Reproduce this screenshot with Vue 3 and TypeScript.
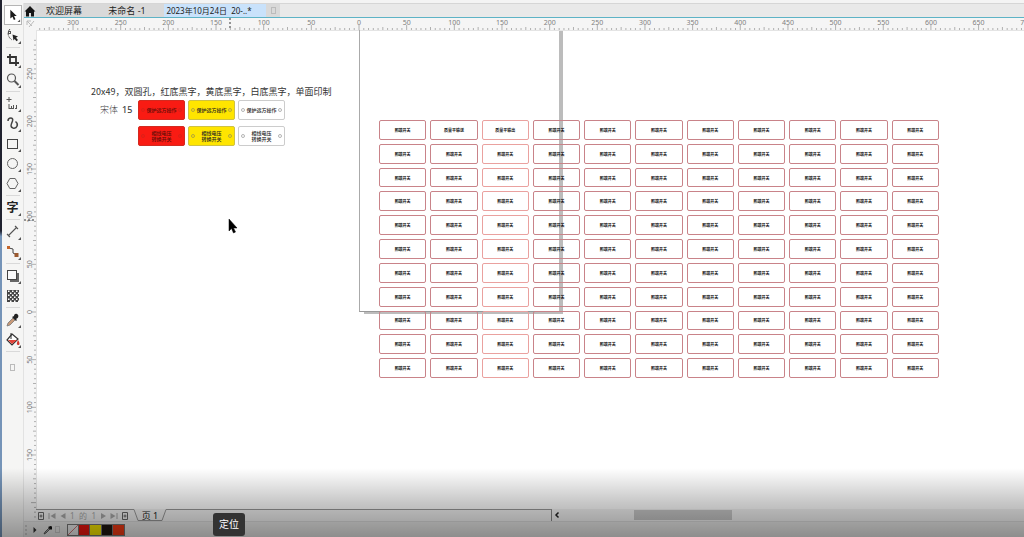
<script setup lang="ts">
import { computed, onBeforeUnmount, onMounted, ref } from 'vue'

interface Tick {
  at: number
  major: boolean
  medium: boolean
  label: string
}

const UNIT = 47.66

const viewWidth = ref(window.innerWidth)
const viewHeight = ref(window.innerHeight)

function measure() {
  viewWidth.value = window.innerWidth
  viewHeight.value = window.innerHeight
}
onMounted(() => window.addEventListener('resize', measure))
onBeforeUnmount(() => window.removeEventListener('resize', measure))

function makeTicks(origin: number, start: number, end: number, labelEnd: number): Tick[] {
  const step = UNIT / 10
  const ticks: Tick[] = []
  for (let i = Math.ceil((start - origin) / step); origin + i * step <= end; i++) {
    const at = origin + i * step
    ticks.push({
      at,
      major: i % 10 === 0,
      medium: i % 5 === 0,
      label: i % 10 === 0 && at < labelEnd ? String(Math.abs(i) * 5) : '',
    })
  }
  return ticks
}

const horizontalTicks = computed(() => makeTicks(335, 15, viewWidth.value - 20, viewWidth.value))
const verticalTicks = computed(() => makeTicks(282, 6, viewHeight.value - 46, viewHeight.value - 70))

interface Tool {
  id: string
  name: string
  flyout?: boolean
  divider?: boolean
}

const tools: Tool[] = [
  { id: 'pick', name: '选择', flyout: true },
  { id: 'shape', name: '形状', flyout: true, divider: true },
  { id: 'crop', name: '裁剪', flyout: true },
  { id: 'zoom', name: '缩放', flyout: true, divider: true },
  { id: 'freehand', name: '手绘', flyout: true },
  { id: 'artistic', name: '艺术笔', flyout: true },
  { id: 'rect', name: '矩形', flyout: true },
  { id: 'ellipse', name: '椭圆形', flyout: true },
  { id: 'polygon', name: '多边形', flyout: true, divider: true },
  { id: 'text', name: '文本', flyout: true, divider: true },
  { id: 'dimension', name: '度量', flyout: true },
  { id: 'connector', name: '连接器', flyout: true, divider: true },
  { id: 'shadow', name: '阴影', flyout: true },
  { id: 'transparency', name: '透明度', divider: true },
  { id: 'dropper', name: '颜色滴管', flyout: true },
  { id: 'fill', name: '交互式填充', flyout: true, divider: true },
]

const labels: string[] = Array.from({ length: 121 }, (_, i) =>
  i === 1 ? '质量平输送' : i === 2 ? '质量平输出' : '照端开关',
)

const samples = [
  { tone: 'red', lines: ['保护远方操作'] },
  { tone: 'yellow', lines: ['保护远方操作'] },
  { tone: 'white', lines: ['保护远方操作'] },
  { tone: 'red', lines: ['相线电压', '转换开关'] },
  { tone: 'yellow', lines: ['相线电压', '转换开关'] },
  { tone: 'white', lines: ['相线电压', '转换开关'] },
]

const swatches = ['red', 'yellow', 'black', 'orange']
</script>

<template>
  <div class="app">
    <div class="desktop-edge"></div>
    <nav class="toolbox" aria-label="工具箱">
      <template v-for="tool in tools" :key="tool.id">
        <button class="tool" :class="{ active: tool.id === 'pick' }" :aria-label="tool.name">
          <svg viewBox="0 0 18 18" width="18" height="18">
            <g v-if="tool.id === 'pick'"><path d="M6 3v10l2.400-2.100 1.600 3.600 1.800-.8-1.600-3.500h3z" fill="#1c1c1c" /></g>
            <g v-else-if="tool.id === 'shape'" fill="none" stroke="#555">
              <path d="M6 2c-3 3-2.500 8 2 11" stroke-dasharray="3 1" /><rect x="4.500" y="4.500" width="2" height="2" fill="#fff" />
              <path d="M8.500 7.500l5.500 2-2 1.200 2 2.300-1.500 1.200-1.800-2.300-1.200 1.600z" fill="#222" stroke="none" />
            </g>
            <g v-else-if="tool.id === 'crop'" fill="none" stroke="#333" stroke-width="1.800">
              <path d="M6 3v9h9M3 6h9v9" />
            </g>
            <g v-else-if="tool.id === 'zoom'" fill="none" stroke="#555">
              <circle cx="7.500" cy="7" r="4" stroke-width="1.200" /><path d="M10.500 10l4 4" stroke-width="2" />
            </g>
            <g v-else-if="tool.id === 'freehand'" fill="none" stroke="#555">
              <path d="M5 2v5M2.500 4.500h5M5 9v5M7.500 11v3M9.500 10v4M12.500 10v4" /><path d="M5 13.500h8" stroke-dasharray="2 1" />
            </g>
            <g v-else-if="tool.id === 'artistic'" fill="none" stroke="#444" stroke-width="1.500">
              <path d="M4 6c0-4 6-4 4.500 0-1 3-3 6 .5 7 4 1 6-4 2.500-6.500" />
            </g>
            <rect v-else-if="tool.id === 'rect'" x="3.500" y="4.500" width="10" height="9" fill="none" stroke="#444" />
            <circle v-else-if="tool.id === 'ellipse'" cx="8.500" cy="8.500" r="5" fill="none" stroke="#666" />
            <path v-else-if="tool.id === 'polygon'" d="M5.800 3.500h5.400l2.800 5-2.800 5H5.800L3 8.500z" fill="none" stroke="#666" />
            <text v-else-if="tool.id === 'text'" class="glyph" x="8.500" y="13" text-anchor="middle">字</text>
            <g v-else-if="tool.id === 'dimension'" stroke="#555">
              <path d="M4 13l9-9M3 11l3 3M11 3l3 3" stroke-width="1.100" />
            </g>
            <g v-else-if="tool.id === 'connector'">
              <path d="M5 5l4 1v4l4 2" fill="none" stroke="#444" />
              <rect x="3" y="3" width="3" height="3" fill="#c5662b" /><rect x="10.500" y="10" width="4" height="4" fill="#9b5a30" />
            </g>
            <g v-else-if="tool.id === 'shadow'">
              <rect x="6" y="6" width="9" height="9" fill="#666" /><rect x="3.500" y="3.500" width="9" height="9" fill="#fafafa" stroke="#444" />
            </g>
            <g v-else-if="tool.id === 'transparency'">
              <rect x="3" y="3" width="12" height="12" fill="#444" />
              <template v-for="n in 18" :key="n">
                <rect :x="4 + ((n - 1) % 3) * 4 + (Math.floor((n - 1) / 3) % 2) * 2" :y="3.500 + Math.floor((n - 1) / 3) * 2" width="1.500" height="1.500" fill="#fff" />
              </template>
            </g>
            <g v-else-if="tool.id === 'dropper'">
              <path d="M3 15l1-3 5-5 2 2-5 5z" fill="#c99a78" stroke="#777" stroke-width=".8" />
              <path d="M8 6l4 4 1-1-1-1c3-1 3-4 1-5s-3 1-3 2z" fill="#222" />
            </g>
            <g v-else>
              <path d="M8 3l6 5-6 6-5-5z" fill="#fff" stroke="#333" stroke-width="1.200" />
              <path d="M4 9h9l-5 4z" fill="#e1443a" /><path d="M7 2v6" stroke="#333" /><path d="M14 9c2 3 2 5 0 5s-1-3 0-5" fill="#d6372e" />
            </g>
            <path v-if="tool.flyout" d="M17 14v3h-3z" fill="#555" />
          </svg>
        </button>
        <hr v-if="tool.divider" class="tool-divider" />
      </template>
      <button class="add-tool" aria-label="自定义工具箱"><span></span></button>
    </nav>

    <div class="workspace">
      <header class="tabs">
        <button class="home" aria-label="主页">
          <svg viewBox="0 0 12 12" width="12" height="12"><path d="M6 1L0.500 6.500H2V11.500H5V8H7V11.500H10V6.500H11.500z" fill="#161616" /></svg>
        </button>
        <button class="tab welcome">欢迎屏幕</button>
        <button class="tab untitled">未命名 -1</button>
        <button class="tab current">2023年10月24日&nbsp; 20-..*</button>
        <button class="tab new" aria-label="新建"><span></span></button>
      </header>

      <div class="ruler-top">
        <svg width="100%" height="12">
          <path d="M3 3l5 5M3 3v4M3 3h4M5 9l5-6" stroke="#bbb" fill="none" />
          <g v-for="tick in horizontalTicks" :key="tick.at">
            <line :x1="tick.at" :x2="tick.at" :y1="tick.major ? 7 : tick.medium ? 9 : 10" y2="12" class="tick" />
            <text v-if="tick.label" :x="tick.at" y="7" text-anchor="middle" class="tick-label">{{ tick.label }}</text>
          </g>
          <line x1="206" x2="206" y1="0" y2="12" class="marker" />
        </svg>
      </div>

      <div class="work-row">
        <div class="ruler-left">
          <svg width="12" height="100%">
            <g v-for="tick in verticalTicks" :key="tick.at">
              <line :y1="tick.at" :y2="tick.at" :x1="tick.major ? 7 : tick.medium ? 9 : 10" x2="12" class="tick" />
              <text v-if="tick.label" class="tick-label" text-anchor="middle" :transform="`translate(8 ${tick.at}) rotate(-90)`">{{ tick.label }}</text>
            </g>
            <line y1="190" y2="190" x1="0" x2="12" class="marker" />
          </svg>
        </div>

        <div class="document">
          <main class="canvas">
            <div class="page"><i class="shade-right"></i><i class="shade-bottom"></i></div>

            <p class="note">20x49，双圆孔，红底黑字，黄底黑字，白底黑字，单面印制</p>
            <p class="font-note">宋体&nbsp; <b>15</b></p>
            <div class="samples">
              <div v-for="(sample, i) in samples" :key="i" class="sample" :class="sample.tone">
                <i class="hole"></i>
                <span><template v-for="(line, j) in sample.lines" :key="j"><br v-if="j" />{{ line }}</template></span>
                <i class="hole"></i>
              </div>
            </div>

            <div class="labels">
              <div v-for="(text, i) in labels" :key="i" class="label" :class="{ light: i % 11 === 2 }">{{ text }}</div>
            </div>

            <svg class="pointer" viewBox="0 0 10 16" width="10" height="16">
              <path d="M1 1v12l2.500-2.500L5.500 15l2-1-2-4H9z" fill="#000" stroke="#000" stroke-width=".5" />
            </svg>
          </main>

          <footer class="page-bar">
            <div class="page-nav">
              <button aria-label="在前面添加页"><svg viewBox="0 0 8 8" width="8" height="8"><path d="M1.500.5h5v7h-5zM4 2.500v3M2.500 4h3" fill="none" stroke="#666" /></svg></button>
              <button aria-label="第一页"><svg viewBox="0 0 8 8" width="8" height="8"><path d="M1 1v6" stroke="#aaa" /><path d="M7.500 1v6L2.500 4z" fill="#aaa" /></svg></button>
              <button aria-label="上一页"><svg viewBox="0 0 8 8" width="8" height="8"><path d="M6.500 1v6L1.500 4z" fill="#aaa" /></svg></button>
              <span class="page-count"><span>1</span><span>的</span><span>1</span></span>
              <button aria-label="下一页"><svg viewBox="0 0 8 8" width="8" height="8"><path d="M2 1v6l5-3z" fill="#aaa" /></svg></button>
              <button aria-label="最后一页"><svg viewBox="0 0 8 8" width="8" height="8"><path d="M.5 1v6l5-3z" fill="#aaa" /><path d="M7 1v6" stroke="#aaa" /></svg></button>
              <button aria-label="在后面添加页"><svg viewBox="0 0 8 8" width="8" height="8"><path d="M1.500.5h5v7h-5zM4 2.500v3M2.500 4h3" fill="none" stroke="#666" /></svg></button>
            </div>
            <button class="page-tab">
              <svg viewBox="0 0 34 12" width="34" height="12"><path d="M0 .5h1L5 11.500h24L33 .5h1" fill="none" stroke="#999" /></svg>
              <span>页 1</span>
            </button>
            <div class="tab-space"></div>
            <button class="scroll-left" aria-label="向左滚动"><svg viewBox="0 0 6 8" width="6" height="8"><path d="M4.500 1.500L2 4l2.500 2.500" fill="none" stroke="#222" stroke-width="1.500" /></svg></button>
            <div class="scroll-track"><div class="thumb"></div></div>
          </footer>
        </div>
      </div>

      <div class="palette">
        <i class="grip"></i>
        <button aria-label="调色板选项"><svg viewBox="0 0 6 8" width="6" height="8"><path d="M1.500 1v6l3-3z" fill="#333" /></svg></button>
        <button class="picker" aria-label="滴管"><svg viewBox="0 0 10 10" width="10" height="10"><path d="M1 9l1-2 4-4 1 1-4 4z" fill="#aaa" stroke="#444" stroke-width=".8" /><path d="M5 2l3 3 1-1V1.500L7.500 1z" fill="#111" /></svg></button>
        <button class="blank" aria-label="添加颜色"><span></span></button>
        <div class="swatches">
          <button class="swatch none" aria-label="无填充"><svg viewBox="0 0 10 10" width="10" height="10"><path d="M0 10L10 0" stroke="#c77" /></svg></button>
          <button v-for="s in swatches" :key="s" class="swatch" :class="s" :aria-label="s"></button>
        </div>
      </div>
    </div>

    <div class="dimmer"></div>
    <div class="tooltip" role="tooltip">定位</div>
  </div>
</template>

<style>
body {
  margin: 0;
  overflow: hidden;
}
</style>

<style scoped>
.app {
  position: relative;
  display: flex;
  box-sizing: border-box;
  height: 100vh;
  padding-top: 3px;
  overflow: hidden;
  background: #f4f4f4;
  color: #222;
  font-family: "Noto Sans", "Noto Sans CJK SC", sans-serif;
}
button {
  display: flex;
  align-items: center;
  justify-content: center;
  padding: 0;
  border: 0;
  background: none;
  color: inherit;
  font-family: inherit;
}
p {
  margin: 0;
}
.desktop-edge {
  flex: 0 0 2px;
  margin-top: -3px;
  background: linear-gradient(#20222f 0 43%, #7594b8 44% 100%);
}
.toolbox {
  display: flex;
  flex: 0 0 22px;
  flex-direction: column;
  align-items: center;
  box-sizing: border-box;
  padding-top: 1px;
  border-right: 1px solid #e2e2e2;
  background: #f5f5f4;
}
.tool {
  flex: 0 0 20px;
  width: 20px;
}
.tool.active {
  flex-basis: 18px;
  box-sizing: border-box;
  width: 18px;
  margin: 1px 0;
  border: 1px solid #b5b5b5;
  background: #fff;
}
.tool-divider {
  width: 14px;
  height: 1px;
  margin: 1px 0 2px;
  border: 0;
  background: #d9d9d9;
}
.glyph {
  font: bold 12px "Noto Sans CJK SC", sans-serif;
  fill: #222;
}
.add-tool {
  margin-top: 10px;
}
.add-tool span,
.tab.new span,
.blank span {
  box-sizing: border-box;
  width: 5px;
  height: 7px;
  border: 1px solid #bbb;
}
.workspace {
  display: flex;
  flex: 1;
  flex-direction: column;
  min-width: 0;
}
.tabs {
  display: flex;
  flex: 0 0 15px;
  box-sizing: border-box;
  border-top: 1px solid #d6d6d6;
  border-bottom: 1px solid #5db3c6;
  background: #e9e9e9;
}
.home {
  width: 12px;
  background: #dcdcdc;
}
.tab {
  box-sizing: border-box;
  background: #d9d9d9;
  font-size: 9px;
  line-height: 13px;
  white-space: nowrap;
}
.welcome {
  width: 64px;
  padding-right: 8px;
}
.untitled {
  width: 64px;
  padding-right: 10px;
}
.current {
  width: 102px;
  padding-right: 14px;
  padding-left: 2px;
  background: #c9e2fb;
  font-size: 8px;
}
.new {
  width: 14px;
}
.ruler-top {
  flex: 0 0 12px;
  overflow: hidden;
  background: #f5f5f5;
}
.ruler-top svg,
.ruler-left svg {
  display: block;
}
.tick {
  stroke: #b0b0b0;
  stroke-width: 1px;
}
.tick-label {
  fill: #808080;
  font-size: 7px;
}
.marker {
  stroke: #333;
  stroke-dasharray: 2 2;
}
.work-row {
  display: flex;
  flex: 1;
  min-height: 0;
}
.ruler-left {
  flex: 0 0 12px;
  height: 100%;
  overflow: hidden;
  background: #f5f5f5;
}
.document {
  display: flex;
  flex: 1;
  flex-direction: column;
  min-width: 0;
}
.canvas {
  position: relative;
  flex: 1;
  overflow: hidden;
  background: #fff;
  box-shadow: inset 1px 1px #e4e4e4;
}
.page {
  position: absolute;
  top: 0;
  left: 323px;
  width: 199px;
  height: 281px;
  border-bottom: 1px solid #999;
  border-left: 1px solid #aaa;
}
.shade-right {
  position: absolute;
  top: 1px;
  right: -4px;
  bottom: -3px;
  width: 4px;
  background: #bcbcbc;
}
.shade-bottom {
  position: absolute;
  right: 0;
  bottom: -3px;
  left: 4px;
  height: 2px;
  background: #bcbcbc;
}
.note {
  position: absolute;
  top: 55px;
  left: 55px;
  color: #333;
  font-family: "Noto Sans CJK SC", sans-serif;
  font-size: 9px;
  line-height: 13px;
  white-space: nowrap;
}
.font-note {
  position: absolute;
  top: 73px;
  left: 64px;
  color: #444;
  font-family: "Noto Sans CJK SC", sans-serif;
  font-size: 9px;
  font-weight: 300;
  line-height: 13px;
  white-space: nowrap;
}
.font-note b {
  font-family: "Noto Sans", sans-serif;
  font-weight: 500;
}
.samples {
  position: absolute;
  top: 70px;
  left: 102px;
  display: grid;
  grid-template-columns: repeat(3, 47px);
  gap: 6px 3px;
}
.sample {
  display: flex;
  align-items: center;
  justify-content: space-between;
  box-sizing: border-box;
  height: 20px;
  padding: 0 2px;
  border: 1px solid #ccc;
  border-radius: 2px;
  font-family: "Noto Sans CJK SC", sans-serif;
  font-size: 5px;
  font-weight: 500;
  line-height: 6px;
  text-align: center;
}
.sample.red {
  border-color: #d32a20;
  background: #f91b13;
  color: #5c0d08;
}
.sample.yellow {
  border-color: #cfc243;
  background: #ffe500;
}
.hole {
  box-sizing: border-box;
  width: 4px;
  height: 4px;
  border: 1px solid rgba(110, 110, 110, 0.5);
  border-radius: 50%;
}
.red .hole {
  border-color: #dd2018;
}
.labels {
  position: absolute;
  top: 90px;
  left: 343px;
  display: grid;
  grid-template-columns: repeat(11, 1fr);
  grid-auto-rows: 1fr;
  gap: 4px;
  width: 560px;
  height: 258px;
}
.label {
  display: flex;
  align-items: center;
  justify-content: center;
  box-sizing: border-box;
  border: 1px solid #c98389;
  border-radius: 2px;
  color: #111;
  font-family: "Noto Sans CJK SC", sans-serif;
  font-size: 4px;
  font-weight: 700;
  line-height: 6px;
}
.label.light {
  border-color: #eaa19f;
}
.pointer {
  position: absolute;
  top: 188px;
  left: 192px;
}
.page-bar {
  display: flex;
  flex: 0 0 12px;
  background: #f3f3f3;
}
.page-nav {
  display: flex;
  align-items: center;
  gap: 3px;
  box-sizing: border-box;
  width: 97px;
  padding-left: 1px;
  border-top: 1px solid #999;
}
.page-count {
  display: flex;
  justify-content: space-between;
  width: 26px;
  color: #aaa;
  font-size: 8px;
  line-height: 11px;
}
.page-tab {
  position: relative;
  width: 34px;
}
.page-tab svg {
  position: absolute;
  inset: 0;
}
.page-tab span {
  font-size: 9px;
  line-height: 11px;
}
.tab-space {
  flex: 0 1 384px;
  border-top: 1px solid #999;
  border-right: 1px solid #888;
}
.scroll-left {
  width: 10px;
}
.scroll-track {
  flex: 1;
  padding: 1px 0 1px 72px;
}
.thumb {
  width: 25%;
  height: 10px;
  background: #c8c8c8;
}
.palette {
  display: flex;
  flex: 0 0 16px;
  align-items: center;
  box-sizing: border-box;
  border-top: 1px solid #ddd;
  background: #ececeb;
}
.grip {
  box-sizing: border-box;
  width: 4px;
  height: 10px;
  margin: 0 3px 0 1px;
  border-left: 2px dotted #ccc;
}
.picker {
  margin-left: 5px;
}
.blank {
  margin: 0 5px 0 2px;
}
.blank span {
  border-color: #ccc;
}
.swatches {
  display: flex;
  box-sizing: border-box;
  height: 12px;
  margin-left: 2px;
  border: 1px solid #777;
}
.swatch {
  box-sizing: border-box;
  width: 11px;
  height: 10px;
  border-right: 1px solid #777;
}
.swatch.none {
  background: #eee;
}
.swatch.red {
  background: #f0160f;
}
.swatch.yellow {
  width: 12px;
  background: #f8e800;
}
.swatch.black {
  background: #201710;
}
.swatch.orange {
  border-right: 0;
  background: #f43a14;
}
.dimmer {
  position: absolute;
  right: 0;
  bottom: 0;
  left: 0;
  height: 69px;
  background: linear-gradient(rgba(0, 0, 0, 0), rgba(0, 0, 0, 0.22) 50%, rgba(0, 0, 0, 0.4));
  pointer-events: none;
}
.tooltip {
  position: absolute;
  bottom: 1px;
  left: 213px;
  padding: 3px 6px 4px;
  border-radius: 3px;
  background: #333;
  color: #fff;
  font-size: 10px;
  line-height: 16px;
}
</style>
